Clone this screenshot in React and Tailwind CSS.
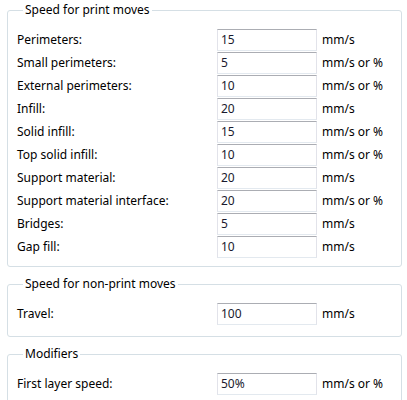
const groups = [
  {
    title: 'Speed for print moves',
    pad: 'pb-[8px]',
    rows: [
      ['Perimeters:', '15', 'mm/s'],
      ['Small perimeters:', '5', 'mm/s or %'],
      ['External perimeters:', '10', 'mm/s or %'],
      ['Infill:', '20', 'mm/s'],
      ['Solid infill:', '15', 'mm/s or %'],
      ['Top solid infill:', '10', 'mm/s or %'],
      ['Support material:', '20', 'mm/s'],
      ['Support material interface:', '20', 'mm/s or %'],
      ['Bridges:', '5', 'mm/s'],
      ['Gap fill:', '10', 'mm/s'],
    ],
  },
  { title: 'Speed for non-print moves', pad: 'pb-[11px]', rows: [['Travel:', '100', 'mm/s']] },
  { title: 'Modifiers', pad: 'pb-[8px]', rows: [['First layer speed:', '50%', 'mm/s or %']] },
];

function Row({ label, value, unit }) {
  return (
    <div className="flex items-center h-[23px]">
      <span className="w-[200px]">{label}</span>
      <div className="w-[100px] h-[22px] border border-[#e2e3ea] border-t-[#abadb3] border-b-[#e3e9ef] bg-white flex items-center px-[3px] text-[#1a1a2e]">
        {value}
      </div>
      <span className="ml-[5px]">{unit}</span>
    </div>
  );
}

export default function App() {
  return (
    <div className="w-[407px] h-[400px] bg-white overflow-hidden text-[12px] text-black pl-[7px] pr-[5px]" style={{ fontFamily: '"Noto Sans", "Open Sans", sans-serif' }}>
      <div className="flex flex-col gap-[9px] pt-[2px]">
        {groups.map((g) => (
          <fieldset key={g.title} className={`border border-[#d5dfe5] rounded-[3px] pl-[9px] pt-[10px] ${g.pad}`}>
            <legend className="ml-[6px] px-[2px] leading-[16px]">{g.title}</legend>
            {g.rows.map(([l, v, u]) => (
              <Row key={l} label={l} value={v} unit={u} />
            ))}
          </fieldset>
        ))}
      </div>
    </div>
  );
}
